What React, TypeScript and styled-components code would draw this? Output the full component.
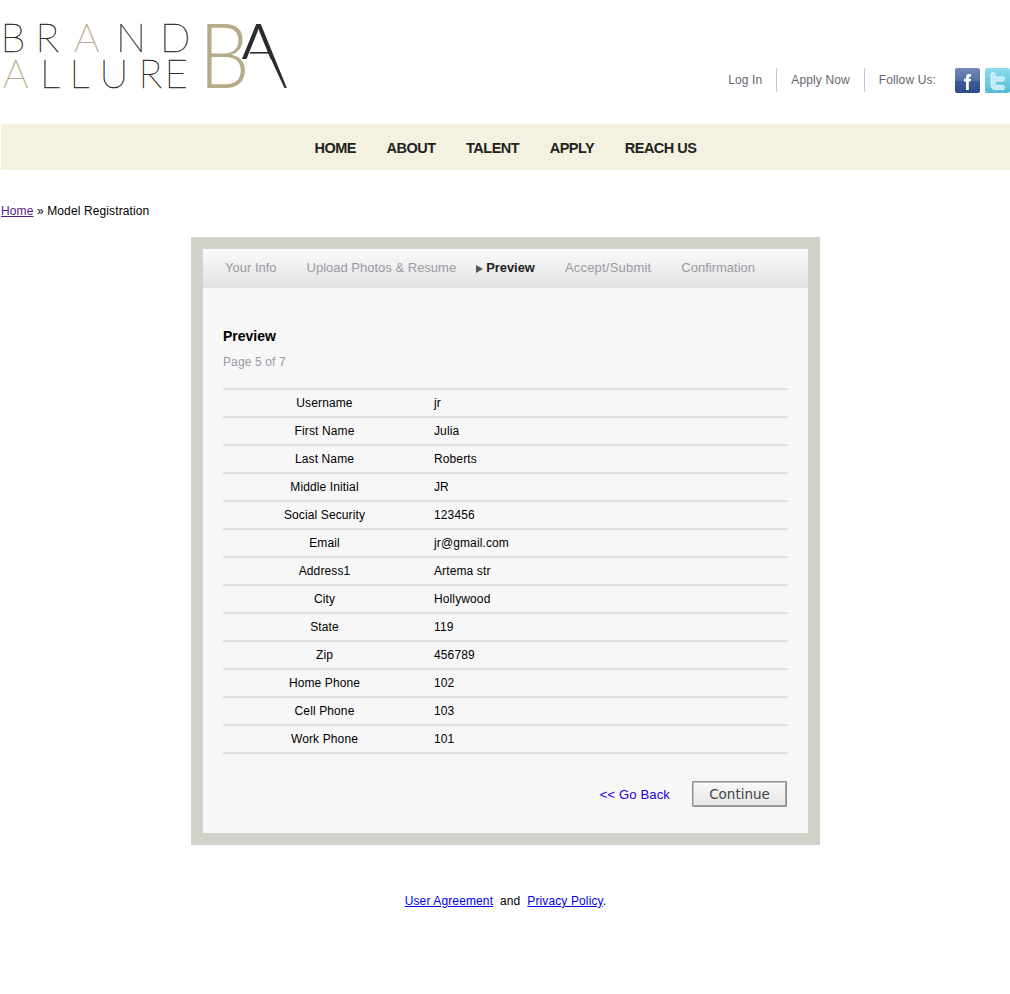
import React from "react";
import styled, { createGlobalStyle } from "styled-components";

const Global = createGlobalStyle`
  html, body { margin: 0; padding: 0; background: #fff; }
  body { font-family: "Liberation Sans", Arial, sans-serif; font-size: 12px; letter-spacing: 0.12px; color: #000; }
`;
const Page = styled.div`
  width: 1010px;
  height: 994px;
  overflow: hidden;
  padding-left: 1px;
  box-sizing: border-box;
`;
const Header = styled.header`
  height: 124px;
  display: flex;
  justify-content: space-between;
  margin-left: -1px;
`;
const Logo = styled.svg`
  display: block;
  width: 300px;
  height: 124px;
  opacity: 0.99;
  letter-spacing: 0;
`;
const TopLinks = styled.div`
  display: flex;
  align-items: center;
  height: 24px;
  margin-top: 68px;
`;
const TopItem = styled.a<{ $divider?: boolean }>`
  color: #66666e;
  height: 24px;
  line-height: 24px;
  padding: 0 14px;
  border-right: ${(p) => (p.$divider ? "1px solid #c8c8c8" : "none")};
`;
const Social = styled.div`
  display: flex;
  gap: 5px;
  margin-left: 5px;
`;
const SocialIcon = styled.svg`
  display: block;
  width: 25px;
  height: 25px;
`;
const NavBar = styled.nav`
  height: 46px;
  background: #f5f1e0;
  display: flex;
  justify-content: center;
  gap: 30.5px;
  align-items: center;
  padding-top: 2px;
  box-sizing: border-box;
`;
const NavItem = styled.a`
  font-size: 14.5px;
  font-weight: 700;
  color: #222;
  letter-spacing: -0.5px;
`;
const Breadcrumb = styled.div`
  margin-top: 34px;
  height: 14px;
  line-height: 14px;
`;
const Crumb = styled.a`
  color: #551a8b;
  text-decoration: underline;
`;
const Frame = styled.main`
  box-sizing: border-box;
  width: 629px;
  height: 608px;
  margin: 19px 0 0 190px;
  border: 12px solid #d2d2ca;
  background: #f7f7f7;
  display: flex;
  flex-direction: column;
`;
const Steps = styled.div`
  height: 39px;
  background: linear-gradient(#fafafa, #e2e2e2);
  display: flex;
  align-items: center;
  padding: 0 0 2px 22px;
  box-sizing: border-box;
`;
const Step = styled.span<{ $active?: boolean; $wide?: boolean }>`
  font-size: ${(p) => (p.$active ? "12.9px" : "13px")};
  letter-spacing: ${(p) => (p.$wide ? "0.2px" : "0")};
  color: ${(p) => (p.$active ? "#222" : "#9a9aa2")};
  font-weight: ${(p) => (p.$active ? 700 : 400)};
  margin-right: 30px;
  display: flex;
  align-items: center;
`;
const Arrow = styled.i`
  display: block;
  width: 0;
  height: 0;
  border-left: 7px solid #555;
  border-top: 4px solid transparent;
  border-bottom: 4px solid transparent;
  margin: 3px 3px 0 -10px;
`;
const Content = styled.div`
  padding: 0 20px;
  flex: 1;
  display: flex;
  flex-direction: column;
`;
const Title = styled.h2`
  margin: 39px 0 0;
  font-size: 14px;
  letter-spacing: 0;
  line-height: 18px;
  font-weight: 700;
`;
const PageNum = styled.p`
  margin: 10px 0 0;
  line-height: 14px;
  color: #9a9aa2;
`;
const Rows = styled.div`
  margin-top: 19px;
  border-top: 2px solid #e0e0e0;
`;
const Row = styled.div`
  display: grid;
  grid-template-columns: 203px 1fr;
  height: 26px;
  line-height: 26px;
  border-bottom: 2px solid #e0e0e0;
`;
const Label = styled.span`
  text-align: center;
`;
const Value = styled.span`
  padding-left: 8px;
`;
const Actions = styled.div`
  display: flex;
  justify-content: flex-end;
  align-items: center;
  margin-top: 27px;
  padding-right: 1px;
`;
const Back = styled.a`
  color: #2200dd;
  font-size: 13.1px;
  margin-right: 22px;
`;
const Continue = styled.button`
  box-sizing: border-box;
  width: 95px;
  height: 26px;
  padding: 0;
  font-family: "DejaVu Sans", sans-serif;
  font-size: 13.5px;
  color: #444;
  background: linear-gradient(#f8f8f8, #e6e6e6);
  border: 1px solid #8c8c8c;
  border-radius: 1px;
  box-shadow: inset 1px 1px 0 #c4c4c4, inset -1px -1px 0 #a4a4a4;
`;
const Footer = styled.footer`
  margin-top: 49px;
  text-align: center;
  line-height: 14px;
`;
const FootLink = styled.a`
  color: #0000ee;
  text-decoration: underline;
`;

const rows: [string, string][] = [
  ["Username", "jr"], ["First Name", "Julia"], ["Last Name", "Roberts"], ["Middle Initial", "JR"],
  ["Social Security", "123456"], ["Email", "jr@gmail.com"], ["Address1", "Artema str"], ["City", "Hollywood"],
  ["State", "119"], ["Zip", "456789"], ["Home Phone", "102"], ["Cell Phone", "103"], ["Work Phone", "101"],
];

const tan = "#b5ab86";
const dark = "#2a2a2a";
const logoFont = "Lato, Inter, sans-serif";

const BrandLogo = () => {
  const letter = (t: string, x: number, y: number, color: string) => (
    <text key={`${t}${x}`} x={x} y={y} fill={color} stroke={color} strokeWidth={0.45} fontFamily={logoFont} fontWeight={100} fontSize={40}>{t}</text>
  );
  return (
    <Logo viewBox="0 0 300 124">
      <defs>
        <clipPath id="monoA"><path d="M225 10H300V100H290L271 59H225z" /></clipPath>
      </defs>
      {letter("B", 0.500, 52, dark)}{letter("R", 35.500, 52, dark)}{letter("A", 74, 52, tan)}{letter("N", 116, 52, dark)}{letter("D", 160, 52, dark)}
      {letter("A", 3, 88, tan)}{letter("L", 40, 88, dark)}{letter("L", 69.500, 88, dark)}{letter("U", 99.500, 88, dark)}{letter("R", 138.500, 88, dark)}{letter("E", 164.500, 88, dark)}
      <g clipPath="url(#monoA)">
        <text x={229} y={88} fill={dark} fontFamily={logoFont} fontWeight={300} fontSize={90}>A</text>
      </g>
      <rect x={250} y={52} width={22} height={1.6} fill={dark} />
      <text transform="translate(199 88) scale(0.89 1)" fill={tan} fontFamily={logoFont} fontWeight={300} fontSize={90}>B</text>
    </Logo>
  );
};

const Facebook = () => (
  <SocialIcon viewBox="0 0 25 25">
    <defs>
      <linearGradient id="fb" x1="0" y1="0" x2="0" y2="1">
        <stop offset="0" stopColor="#7289b5" /><stop offset="0.5" stopColor="#5470a8" /><stop offset="0.51" stopColor="#3f5c9a" /><stop offset="1" stopColor="#2f4a8a" />
      </linearGradient>
    </defs>
    <rect width="25" height="25" rx="2" fill="url(#fb)" />
    <path d="M11 22v-8.500H9v-2.700h2V9.200C11 7 12.200 6 14 6h2v2.700h-1.200c-.8 0-1 .4-1 1v1.100H16l-.4 2.700h-1.800V22z" fill="#fff" />
  </SocialIcon>
);
const Twitter = () => (
  <SocialIcon viewBox="0 0 25 25">
    <defs>
      <linearGradient id="tw" x1="0" y1="0" x2="0" y2="1">
        <stop offset="0" stopColor="#8fdcec" /><stop offset="1" stopColor="#55bcd8" />
      </linearGradient>
    </defs>
    <rect width="25" height="25" rx="2" fill="url(#tw)" />
    <path d="M6 6c0-2 4-2 4 0v3h8c2 0 2 4 0 4h-8v2.500c0 1.500.8 2 2 2h6c2 0 2 4 0 4h-7c-3.500 0-5-2-5-5z" fill="#bfeaf4" stroke="#e2f7fb" strokeWidth="1" />
  </SocialIcon>
);

export default function App() {
  return (
    <Page>
      <Global />
      <Header>
        <BrandLogo />
        <TopLinks>
          <TopItem $divider>Log In</TopItem>
          <TopItem $divider>Apply Now</TopItem>
          <TopItem>Follow Us:</TopItem>
          <Social><Facebook /><Twitter /></Social>
        </TopLinks>
      </Header>
      <NavBar>
        {["HOME", "ABOUT", "TALENT", "APPLY", "REACH US"].map((n) => <NavItem key={n}>{n}</NavItem>)}
      </NavBar>
      <Breadcrumb><Crumb href="#">Home</Crumb> » Model Registration</Breadcrumb>
      <Frame>
        <Steps>
          <Step>Your Info</Step>
          <Step>Upload Photos &amp; Resume</Step>
          <Step $active><Arrow />Preview</Step>
          <Step $wide>Accept/Submit</Step>
          <Step>Confirmation</Step>
        </Steps>
        <Content>
          <Title>Preview</Title>
          <PageNum>Page 5 of 7</PageNum>
          <Rows>
            {rows.map(([l, v]) => (
              <Row key={l}><Label>{l}</Label><Value>{v}</Value></Row>
            ))}
          </Rows>
          <Actions>
            <Back>&lt;&lt; Go Back</Back>
            <Continue>Continue</Continue>
          </Actions>
        </Content>
      </Frame>
      <Footer>
        <FootLink href="#">User Agreement</FootLink>&nbsp; and &nbsp;<FootLink href="#">Privacy Policy</FootLink>.
      </Footer>
    </Page>
  );
}
